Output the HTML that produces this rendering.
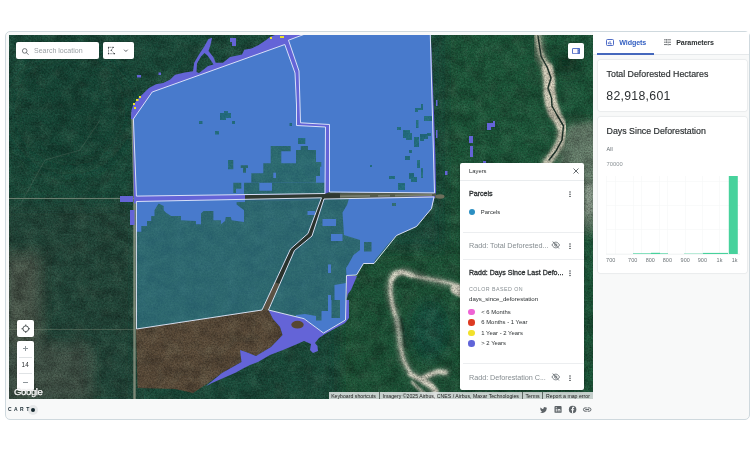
<!DOCTYPE html>
<html lang="en">
<head>
<meta charset="utf-8">
<title>Deforestation map</title>
<style>
*{box-sizing:border-box;margin:0;padding:0}
html,body{width:754px;height:450px;background:#fff;overflow:hidden}
body{position:relative;font-family:"Liberation Sans",sans-serif;color:#2c3032;-webkit-font-smoothing:antialiased}
.abs{position:absolute}
.t{position:absolute;white-space:nowrap;line-height:1}
#card{position:absolute;left:5px;top:31px;width:744.5px;height:388.6px;border:1px solid #cfd9de;border-radius:5px;background:#f8f9f9;overflow:hidden}
#mapwrap{position:absolute;left:9px;top:35px;width:584px;height:364px;overflow:hidden;background:#1f4a37}
#mapwrap svg{position:absolute;left:0;top:0}
.btn{position:absolute;background:#fff;border-radius:2px;box-shadow:0 0 2px rgba(0,0,0,.25)}
#tabs{position:absolute;left:593px;top:32px;width:155.5px;height:23px;background:#fff;border-bottom:1px solid #e6e9eb}
.wcard{position:absolute;left:598px;width:148.5px;background:#fff;border-radius:2px;box-shadow:0 0 0 .5px #e3e7e9,0 0 2px rgba(40,50,60,.10)}
#layers{position:absolute;left:460px;top:163.3px;width:123.6px;height:226.6px;background:#fff;border-radius:2px;box-shadow:0 1px 3px rgba(0,0,0,.35)}
.sep{position:absolute;left:3px;width:120.6px;height:1px;background:#eceef0}
.dot{position:absolute;width:6.6px;height:6.6px;border-radius:50%}
.kebab{position:absolute;width:2px}
.kebab i{display:block;width:1.4px;height:1.4px;border-radius:50%;background:#3a4044;margin-bottom:.85px}
.attr{position:absolute;top:392.5px;height:6.5px;color:#1a1a1a;font-size:5.2px;line-height:6.5px;white-space:nowrap;overflow:hidden;text-align:center}
</style>
</head>
<body>
<div id="root" style="position:absolute;left:0;top:0;width:754px;height:450px;will-change:transform">
<div id="card"></div>

<div id="mapwrap">
<svg id="map" width="584" height="364" viewBox="9 35 584 364">
<defs>
  <filter id="noise" x="0" y="0" width="100%" height="100%">
    <feTurbulence type="fractalNoise" baseFrequency="0.7" numOctaves="3" seed="7" result="n"/>
    <feColorMatrix type="matrix" values="0 0 0 0 0  0 0 0 0 0  0 0 0 0 0  1.6 0 0 0 -0.55"/>
  </filter>
  <filter id="noiseL" x="0" y="0" width="100%" height="100%">
    <feTurbulence type="fractalNoise" baseFrequency="0.5" numOctaves="3" seed="21" result="n"/>
    <feColorMatrix type="matrix" values="0 0 0 0 1  0 0 0 0 1  0 0 0 0 1  0 1.5 0 0 -0.6"/>
  </filter>
  <filter id="noiseBig" x="0" y="0" width="100%" height="100%">
    <feTurbulence type="fractalNoise" baseFrequency="0.07 0.09" numOctaves="4" seed="3" result="n"/>
    <feColorMatrix type="matrix" values="0 0 0 0 0  0 0 0 0 0  0 0 0 0 0  2.4 0 0 0 -0.95"/>
  </filter>
  <filter id="noiseBigL" x="0" y="0" width="100%" height="100%">
    <feTurbulence type="fractalNoise" baseFrequency="0.08 0.07" numOctaves="4" seed="11" result="n"/>
    <feColorMatrix type="matrix" values="0 0 0 0 0.75  0 0 0 0 1  0 0 0 0 0.7  0 2.4 0 0 -1.05"/>
  </filter>
  <filter id="b1"><feGaussianBlur stdDeviation="0.8"/></filter>
  <filter id="b2"><feGaussianBlur stdDeviation="2.2"/></filter>
  <filter id="b6"><feGaussianBlur stdDeviation="7"/></filter>
  <clipPath id="parcelclip">
    <path d="M133.400 119L152.200 92L284.800 44.500L295 73L296.500 105L296.500 125.500L325.500 127L325 193.500L136.400 196.100Z"/>
    <path d="M136.400 201.500L321.500 197.800L308 233.500L290.500 249L262 310L136.500 329Z"/>
    <path d="M324 199L434 197L431.500 208.500L416.500 226.500L396.500 235.500L374 263.500L363.500 263.500L356.500 275L346.500 275.500L345.500 320L323.500 333L304 318.700L268.500 310L294.500 250.500L312 236Z"/>
  </clipPath>
  <clipPath id="mapclip"><rect x="9" y="35" width="584" height="364"/></clipPath>
</defs>
<g clip-path="url(#mapclip)">
<!-- base forest -->
<rect x="9" y="35" width="584" height="364" fill="#1a4e3c"/>
<!-- tonal variation -->
<g filter="url(#b6)">
  <rect x="0" y="205" width="136" height="200" fill="#234a3a"/>
  <rect x="0" y="255" width="40" height="90" fill="#4b5a4e"/>
  <rect x="0" y="345" width="90" height="60" fill="#43554a"/>
  <ellipse cx="70" cy="110" rx="60" ry="60" fill="#174a39"/>
  <rect x="445" y="20" width="160" height="400" fill="#1f5a3b"/>
  <rect x="340" y="250" width="120" height="160" fill="#1d5639"/>
  <rect x="572" y="128" width="30" height="100" fill="#6a8371"/>
  <ellipse cx="566" cy="63" rx="12" ry="10" fill="#0b2a1f"/>
  <ellipse cx="430" cy="330" rx="20" ry="30" fill="#185240"/>
</g>
<g filter="url(#b2)"><path d="M568 127L594 122L594 222L584 222L584 166L558 166Z" fill="#6b8470" opacity=".85"/><path d="M585 185L594 183L594 212L585 214Z" fill="#9aa99a" opacity=".8"/></g>
<!-- olive pasture below the parcel overlay -->
<g clip-path="url(#parcelclip)"><g filter="url(#b2)">
  <path d="M130 196L330 195L440 195L440 240L346 280L346 325L324 337L262 315L130 333Z" fill="#30451a"/>
  <path d="M230 145L330 143L330 196L230 198Z" fill="#2d481a"/>
</g></g>
<!-- brown clearing -->
<path d="M136 329L262 310L268.500 310L273 319L280 327L282.500 335L271 347L256 356L246 352L240 350L241.500 362L222 373L206 384.500L193 393L175 389L137.500 388Z" fill="#5e4e3b"/>
<!-- river sand -->
<g fill="none" stroke-linecap="round" stroke-linejoin="round">
  <path d="M537 33L540 55L547 70L549 92L553 111L562 126.500L561 142L554.500 154.500L546 164" stroke="#8f9a84" stroke-width="11" filter="url(#b2)" opacity=".7"/>
  <g filter="url(#b1)" stroke="#ddd7c2">
    <path d="M537 34L538.500 44L541 54L545 63" stroke-width="4.500" stroke="#c3c2ac"/>
    <path d="M547.500 68L549.500 80L549.500 92" stroke-width="11"/>
    <path d="M549.500 92L551 103L554.500 113" stroke-width="12"/>
    <path d="M555 114L560 122L563 129" stroke-width="10"/>
    <path d="M563 131L560 143L554 153L547 163" stroke-width="7.500" stroke="#d3d0bb"/>
  </g>
  <path d="M538 36L541 56L547.500 68L551 78L548 88L551.500 98L552 106L557 115L563.500 126L562 140L556 151L549 160" stroke="#1d342a" stroke-width="1.500"/>
  <path d="M462 290L452 284L427 279L404 271L393 274.400L389 287L391 301.800L396.700 317L399.500 339.500L402 358.500L410 373L421 379L438 371.700L446 372M421 379L431 386L433 400" stroke="#7e8f7d" stroke-width="7.500" filter="url(#b2)" opacity=".7"/>
  <g filter="url(#b1)" stroke="#dedccb">
    <path d="M462 292L456 289" stroke-width="11"/>
    <path d="M453 284L440 281L427 278.500L413 276" stroke-width="2.700"/>
    <path d="M412 275.500L402 272L395 274L391.500 280" stroke-width="5"/>
    <path d="M391 281L390.500 292L392 303L395 315" stroke-width="3.600"/>
    <path d="M396 317L398.500 330L400.500 348" stroke-width="4" stroke="#a9b3a2"/>
    <path d="M401 318L403.500 332L405 346" stroke-width="3" stroke="#0f3328" opacity=".8"/>
    <path d="M401 349L404 361L410.500 373" stroke-width="3"/>
    <path d="M410 374L420 379.500L430 374.500L438 371.500L445.500 372.500" stroke-width="4.500"/>
    <path d="M423 381L431 385.500L436 391L434 399" stroke-width="5.500"/>
    <path d="M412 382L418 388L425 394" stroke-width="3" stroke="#c9c9b8"/>
  </g>
</g>
<!-- forest texture -->
<rect x="9" y="35" width="584" height="364" fill="#000" filter="url(#noiseBig)" opacity=".22"/>
<rect x="9" y="35" width="584" height="364" fill="#fff" filter="url(#noiseBigL)" opacity=".07"/>
<rect x="9" y="35" width="584" height="364" fill="#000" filter="url(#noise)" opacity=".38"/>
<rect x="9" y="35" width="584" height="364" fill="#fff" filter="url(#noiseL)" opacity=".09"/>
<!-- faint roads -->
<path d="M9 198.500H134" stroke="#7d8a7c" stroke-width="1" opacity=".8"/>
<path d="M9 329.500H134" stroke="#71806f" stroke-width=".8" opacity=".6"/>
<path d="M132.300 112L134.500 196L134.500 400" stroke="#8c9482" stroke-width="2.400" opacity=".85" fill="none"/>
<path d="M20 205L45 160L80 150L100 120" stroke="#5d7463" stroke-width=".7" fill="none" opacity=".5"/>
<!-- road strips between parcels -->
<path d="M245 197.800L436 195" stroke="#545b4c" stroke-width="6.500" fill="none"/>
<path d="M245 197.800L340 196.400" stroke="#2f3831" stroke-width="6.500" fill="none"/>
<ellipse cx="440" cy="196.500" rx="4.500" ry="2.200" fill="#6d6f5c"/>
<path d="M340 196.400L432 195" stroke="#8a8f7f" stroke-width="1.800" stroke-dasharray="30 8 12 5 40 10" opacity=".7"/>
<path d="M322.800 198.400L310 234.800L292.500 249.800L277 283" stroke="#2a322c" stroke-width="5.500" fill="none" stroke-linejoin="round"/>
<path d="M277 283L265.300 310" stroke="#5c5243" stroke-width="5.500" fill="none"/>
<!-- deforestation (violet) -->
<mask id="dmask" maskUnits="userSpaceOnUse" x="9" y="35" width="584" height="364">
  <rect x="9" y="35" width="584" height="364" fill="#fff"/>
  <g fill="#000">
    <!-- forest island in NW strip -->
    <path d="M196.500 72L197 63.500L201 56.500L204.500 53L207.500 55.500L211 60.500L213.500 64.500L208 66L203 70L199 73Z"/>
    <!-- forest remaining in SE of parcel 1 -->
    <path d="M244 182.700H259.300V190.700H272V182.700H324.500V194H244Z"/>
    <path d="M233.300 182.700H241.300V188.700H236V193H233.300Z"/>
    <path d="M251.300 173.300H263.300V163.300H270.700V146H290.700V151.300H281.300V163.300H296V150H300.700V146H308V150H316V162H321.300V166.700H320V176H316V182.700H251.300Z"/>
    <path d="M298 138H305.300V144H298Z M228 160H233.300V169.300H228Z M240.700 165.300H248V168H246V172.700H243V168H240.700Z"/>
    <!-- specks in parcel 1 -->
    <path d="M220 113H224V111H228V113H231V118H226V120H220Z M199 121H202.500V124H199Z M232 121H235V124H232Z M215 131H219V134.500H215Z M289.500 123H292V126H289.500Z"/>
    <!-- specks in parcel 2 -->
    <path d="M415 108H421V104H423V110H418V112H415Z M424 116H432V121H424Z M416 120H418.500V128H416Z M398 127H401V130H398Z M403 130H410V134H407V138H403Z M420 135H424V141H420Z M427 133H431V136H427Z"/>
    <path d="M404 130H409V133H412V140H406V136H404Z M414 137H419V147H414Z M420 134H428V139H420Z M397 127H400V130H397Z M409 150H412V153H409Z M405 156H410V160H405Z M417 160H420V168H417Z M421 168H423V178H421Z M409 173H414V177H417V182H411V179H409Z M389 176H395V179H389Z M398 183H405V190H398Z M370 165H372V167H370Z M392 203H396V206H392Z"/>
    <!-- parcel 4 -->
    <path d="M331.500 300H340V318H331.500Z M364 242H371.500V251.500H364Z M316 311H321.500V320.500H316Z"/>
  </g>
  <path d="M273.300 172.700H276V178H273.300Z" fill="#fff"/>
</mask>
<g fill="#6464d7" mask="url(#dmask)">
  <path d="M131 119L131.500 110L133.400 104.600L139.300 97.400L148.900 87.900L156 84.300L163.200 83.100L170.300 79.500L175.100 74.800L184.700 72.400L193 71.200L194.200 62.800L199 54.500L203.800 47.300L208.500 39L212.100 37.800L210.500 45L208.500 50.900L213.300 56.900L215.700 62.800L222.900 62.800L230 56.900L242 54.500L244.300 49.700L251.500 48.500L258.700 44.900L265.800 40.200L270.600 36.600L275 35L430.800 35L432.500 78L434 113L435.500 160L436 193.200L329 192.300L325 193.800L245 195L245 202L134 203.500L133 119Z"/>
  <path d="M230 38H236V46H232V42H230Z M137 75H141V77.500H137Z M158.500 72.500H161V75H158.500Z"/>
  <path d="M136 199L236.600 199L236.600 204.400L244 210.200L244 221.900L231.600 220.200L230.800 216.900L225.800 216.900L225 221L220.900 224.300L220.900 220.200L213.400 220.200L213.400 211L203.500 211L201 213.600L201 224.300L196 224.300L196 221L181 220.200L181 216L171.100 216L166.100 212.700L163.700 210.200L163.700 206L158.700 203.600L157 206L154.500 210.200L154.500 216L151.200 216L151.200 221L147 221L147 226L141.300 226L141.300 231.800L136 231.800Z"/>
  <path d="M130 210H134.500V225H130Z M120 196H133V202H120Z"/>
  <path d="M349 198.500L435 196L431.500 208.500L416.500 226.500L396.500 235.500L389 243L375 260L374 263.500L363.500 263.500L356.500 275L346.500 275.500L346 268L348 265L353.500 255L360 250L360 240L344 235L342.500 212.500L347 205Z"/>
  <path d="M322.500 219H336V226H322.500Z M331 234H342.500V241H331Z M307.500 211H315V215H307.500Z M328 264.500H331V273H328Z M328 295H331V310H328Z"/>
  <path d="M346.500 276L357 276L351 290L348 294L346.500 300Z"/>
  <path d="M296 315L305 314L316 316L321.500 311L328 311L328 300L334.500 300L334.500 285L346 283L345.500 320L323.500 333L304 318.700L296 317Z"/>
  <path d="M268.500 310L304 318.700L323.500 333L345.500 320L346 300L349 300L349 318L345 323L334 329L325 334L319 338L315 343L317.500 346L318 351L313 353L310 350L311 344L304 341L295 345L283 350L270 355L258 362L250 365L243 368.500L236 372.500L228 376L220 379.500L212 383L206 386L222 373L241.500 362L240 350L246 352L256 356L271 347L282.500 335L280 327L273 319Z"/>
  <!-- specks east of parcel 2 -->
  <path d="M487 123H493V121H495V127H491V130H487Z M469 136H473V143H469Z M470 146H473V157H470Z M445 171H447.500V175H445Z M483 161H486V164H483Z M436 100H437.500V106H436Z M436 130H437.500V138H436Z"/>
</g>
<ellipse cx="297.500" cy="324.700" rx="6.200" ry="3.900" fill="#574733"/>
<!-- yellow specks -->
<path d="M133 103H135V105H133Z M136 99H138.500V101H136Z M139 96H141V98H139Z M134 107H136V109H134Z M280 36H284V38H280Z M270 37H272V39H270Z" fill="#e8e12a"/>
<!-- parcels -->
<g fill="rgba(43,143,194,0.5)" stroke="#e3e9fb" stroke-width="1" stroke-opacity=".92" stroke-linejoin="round">
  <path d="M133.400 119L152.200 92L284.800 44.500L295 73L296.500 105L296.500 125.500L325.500 127L325 193.500L136.400 196.100Z"/>
  <path d="M288.500 40.200L303 34.800L315 30L430.200 30L430.300 35L434.500 192.900L329.500 192L329.500 124.500L300.500 122.800L300 105L299 71Z"/>
  <path d="M136.400 201.500L321.500 197.800L308 233.500L290.500 249L262 310L136.500 329Z"/>
  <path d="M324 199L434 197L431.500 208.500L416.500 226.500L396.500 235.500L374 263.500L363.500 263.500L356.500 275L346.500 275.500L345.500 320L323.500 333L304 318.700L268.500 310L294.500 250.500L312 236Z"/>
</g>

</g>

</svg>
</div>

<!-- map controls -->
<div class="btn" style="left:16.3px;top:42.3px;width:82.7px;height:16.5px"></div>
<svg class="abs" style="left:20.5px;top:46.5px" width="9" height="9" viewBox="0 0 9 9"><circle cx="3.7" cy="3.9" r="2.3" fill="none" stroke="#565c60" stroke-width="0.8"/><path d="M5.4 5.6L7.3 7.5" stroke="#565c60" stroke-width="0.8" stroke-linecap="round"/></svg>
<div class="t" style="left:34px;top:46.9px;font-size:7.05px;color:#9aa1a5">Search location</div>
<div class="btn" style="left:103px;top:42.3px;width:31.2px;height:16.5px"></div>
<svg class="abs" style="left:107px;top:46px" width="24" height="10" viewBox="0 0 24 10"><path d="M1.5 1.3H6.3L4.2 4.3L7.5 7.7H1.5Z" fill="none" stroke="#44494d" stroke-width="0.7" stroke-dasharray="1.1 0.6"/><g fill="#33383b"><circle cx="1.5" cy="1.3" r="0.6"/><circle cx="6.3" cy="1.3" r="0.6"/><circle cx="4.2" cy="4.3" r="0.6"/><circle cx="7.5" cy="7.7" r="0.6"/><circle cx="1.5" cy="7.7" r="0.6"/></g><path d="M17.1 3.7L18.9 5.5L20.7 3.700" fill="none" stroke="#4c5155" stroke-width="0.9"/></svg>
<div class="btn" style="left:568px;top:43px;width:16.2px;height:16.2px"></div>
<svg class="abs" style="left:572px;top:48px" width="8.2" height="6.2" viewBox="0 0 8.2 6.2"><rect x="0.45" y="0.45" width="7.3" height="5.3" rx="0.6" fill="#fdf7fa" stroke="#3c5cc0" stroke-width="0.9"/><rect x="5.6" y="0.5" width="2.1" height="5.2" fill="#3c5cc0"/><rect x="6.3" y="1.5" width="0.7" height="0.7" fill="#fff"/><rect x="6.3" y="3.6" width="0.7" height="0.7" fill="#fff"/></svg>

<div class="btn" style="left:17px;top:319.5px;width:16.5px;height:17px"></div>
<svg class="abs" style="left:20.5px;top:323.5px" width="9.5" height="9.5" viewBox="0 0 10 10"><circle cx="5" cy="5" r="3" fill="none" stroke="#3a3f42" stroke-width="0.9"/><path d="M5 0.5V2.2M5 7.8V9.5M0.5 5H2.2M7.8 5H9.5" stroke="#3a3f42" stroke-width="0.9"/></svg>
<div class="btn" style="left:17px;top:340.5px;width:16.5px;height:50px"></div>
<div class="abs" style="left:19px;top:356.8px;width:12.5px;height:1px;background:#e0e3e5"></div>
<div class="abs" style="left:19px;top:373px;width:12.5px;height:1px;background:#e0e3e5"></div>
<div class="abs" style="left:22.5px;top:348.2px;width:5.6px;height:0.9px;background:#8d9599"></div>
<div class="abs" style="left:24.85px;top:345.8px;width:0.9px;height:5.6px;background:#8d9599"></div>
<div class="abs" style="left:22.5px;top:381.6px;width:5.6px;height:0.9px;background:#8d9599"></div>
<div class="t" style="left:21.6px;top:362px;font-size:6.4px;color:#2c3032">14</div>
<div class="t" id="google" style="left:14px;top:386.6px;font-size:9.6px;color:#fff;letter-spacing:-.4px;-webkit-text-stroke:.25px #fff;text-shadow:0 0 1.5px rgba(0,0,0,.55)">Google</div>

<!-- attribution -->
<div class="abs" style="left:329px;top:392.4px;width:264px;height:6.6px;background:rgba(226,229,229,.86)"></div>
<div class="abs" style="left:378.8px;top:392.4px;width:.8px;height:6.6px;background:rgba(40,50,45,.65)"></div>
<div class="abs" style="left:521.9px;top:392.4px;width:.8px;height:6.6px;background:rgba(40,50,45,.65)"></div>
<div class="abs" style="left:542.3px;top:392.4px;width:.8px;height:6.6px;background:rgba(40,50,45,.65)"></div>
<div class="attr" style="left:329.5px;width:48px">Keyboard shortcuts</div>
<div class="attr" style="left:380.5px;width:140.5px">Imagery ©2025 Airbus, CNES / Airbus, Maxar Technologies</div>
<div class="attr" style="left:523.5px;width:18px">Terms</div>
<div class="attr" style="left:544px;width:48px">Report a map error</div>

<!-- layers panel -->
<div id="layers">
  <div class="t" style="left:9px;top:5.8px;font-size:5.85px;color:#2c3032">Layers</div>
  <svg class="abs" style="left:113.4px;top:5.2px" width="6" height="6" viewBox="0 0 6 6"><path d="M0.5 0.5L5.5 5.5M5.5 0.5L0.5 5.5" stroke="#4d5357" stroke-width="0.85"/></svg>
  <div class="sep" style="top:16.3px;left:0;width:123.6px;background:#e9ecee"></div>
  <div class="t" style="left:9px;top:27.9px;font-size:7.1px;color:#2c3032;-webkit-text-stroke:.3px #2c3032">Parcels</div>
  <svg class="abs" style="left:108.9px;top:27.6px" width="2" height="6.400" viewBox="0 0 2 6.400"><circle cx="1" cy="0.900" r="0.750" fill="#3a4044"/><circle cx="1" cy="3.200" r="0.750" fill="#3a4044"/><circle cx="1" cy="5.500" r="0.750" fill="#3a4044"/></svg>
  <div class="dot" style="left:8.4px;top:45.5px;background:#2b8fc2;width:6.3px;height:6.3px;margin:.25px"></div>
  <div class="t" style="left:20.8px;top:47px;font-size:5.85px;color:#2c3032">Parcels</div>
  <div class="sep" style="top:68.5px"></div>
  <div class="t" style="left:9px;top:79.1px;font-size:7.25px;color:#868d91;letter-spacing:-.02px">Radd: Total Deforested...</div>
  <svg class="abs eye" style="left:91px;top:78.0px" width="9.5" height="8" viewBox="0 0 10 9"><path d="M0.7 4.5C2 2.2 3.5 1.3 5 1.3S8 2.2 9.3 4.5C8 6.8 6.5 7.7 5 7.7S2 6.8 0.7 4.5Z" fill="none" stroke="#5d656a" stroke-width="0.9"/><circle cx="5" cy="4.5" r="1.3" fill="none" stroke="#5d656a" stroke-width="0.9"/><path d="M1.6 0.6L8.6 8.4" stroke="#5d656a" stroke-width="0.9"/></svg>
  <svg class="abs" style="left:108.9px;top:79.6px" width="2" height="6.400" viewBox="0 0 2 6.400"><circle cx="1" cy="0.900" r="0.750" fill="#3a4044"/><circle cx="1" cy="3.200" r="0.750" fill="#3a4044"/><circle cx="1" cy="5.500" r="0.750" fill="#3a4044"/></svg>
  <div class="sep" style="top:96px"></div>
  <div class="t" style="left:9px;top:105.9px;font-size:7.05px;color:#2c3032;-webkit-text-stroke:.3px #2c3032">Radd: Days Since Last Defo...</div>
  <svg class="abs" style="left:108.9px;top:107.1px" width="2" height="6.400" viewBox="0 0 2 6.400"><circle cx="1" cy="0.900" r="0.750" fill="#3a4044"/><circle cx="1" cy="3.200" r="0.750" fill="#3a4044"/><circle cx="1" cy="5.500" r="0.750" fill="#3a4044"/></svg>
  <div class="t" style="left:9px;top:124px;font-size:5.3px;color:#868d91;letter-spacing:.45px">COLOR BASED ON</div>
  <div class="t" style="left:9px;top:132.5px;font-size:6.1px;color:#2c3032">days_since_deforestation</div>
  <div class="dot" style="left:8.4px;top:145.4px;background:#ee63d4"></div>
  <div class="t" style="left:21.3px;top:146.6px;font-size:5.9px">&lt; 6 Months</div>
  <div class="dot" style="left:8.4px;top:155.7px;background:#dd3a22"></div>
  <div class="t" style="left:21.3px;top:157.2px;font-size:5.9px">6 Months - 1 Year</div>
  <div class="dot" style="left:8.4px;top:166.5px;background:#f2e12b"></div>
  <div class="t" style="left:21.3px;top:168.2px;font-size:5.9px">1 Year - 2 Years</div>
  <div class="dot" style="left:8.4px;top:176.7px;background:#6064d8"></div>
  <div class="t" style="left:21.3px;top:177.9px;font-size:5.9px">&gt; 2 Years</div>
  <div class="sep" style="top:199.5px"></div>
  <div class="t" style="left:9px;top:210.9px;font-size:7.25px;color:#868d91;letter-spacing:-.04px">Radd: Deforestation C...</div>
  <svg class="abs eye" style="left:91px;top:209.7px" width="9.5" height="8" viewBox="0 0 10 9"><path d="M0.7 4.5C2 2.2 3.5 1.3 5 1.3S8 2.2 9.3 4.5C8 6.8 6.5 7.7 5 7.7S2 6.8 0.7 4.5Z" fill="none" stroke="#5d656a" stroke-width="0.9"/><circle cx="5" cy="4.5" r="1.3" fill="none" stroke="#5d656a" stroke-width="0.9"/><path d="M1.6 0.6L8.6 8.4" stroke="#5d656a" stroke-width="0.9"/></svg>
  <svg class="abs" style="left:108.9px;top:211.3px" width="2" height="6.400" viewBox="0 0 2 6.400"><circle cx="1" cy="0.900" r="0.750" fill="#3a4044"/><circle cx="1" cy="3.200" r="0.750" fill="#3a4044"/><circle cx="1" cy="5.500" r="0.750" fill="#3a4044"/></svg>
</div>

<!-- footer -->
<div class="abs" style="left:28.2px;top:404.6px;width:10.2px;height:10.2px;border-radius:50%;background:#e6e8e9"></div>
<div class="t" style="left:8px;top:407.3px;font-size:5px;font-weight:bold;letter-spacing:2.45px;color:#16272e">CART</div>
<div class="abs" style="left:31.3px;top:407.7px;width:4px;height:4px;border-radius:50%;background:#16272e"></div>
<svg class="abs" style="left:539px;top:405px" width="54" height="9" viewBox="0 0 54 9">
  <path d="M8.200 1.900c-.3.150-.6.250-1 .3.350-.2.600-.550.750-.950-.350.200-.700.350-1.100.400A1.700 1.700 0 0 0 3.900 3.200C2.500 3.150 1.300 2.450.450 1.400c-.450.800-.200 1.800.550 2.300-.300 0-.550-.100-.800-.200 0 .850.600 1.550 1.400 1.700-.250.050-.500.100-.800.050.250.700.900 1.200 1.650 1.200C1.800 7 .900 7.300 0 7.200c.800.500 1.700.800 2.700.800 3.250 0 5.050-2.700 5.050-5.050v-.250c.350-.250.650-.550.450-.800z" fill="#5d6367" transform="translate(1.100,1.200) scale(0.840)"/>
  <rect x="15.500" y="1" width="7.100" height="6.800" rx="0.900" fill="#5d6367"/><rect x="16.800" y="3.900" width="0.900" height="2.700" fill="#f8f9f9"/><rect x="16.700" y="2.300" width="1.100" height="0.900" fill="#f8f9f9"/><path d="M18.700 6.600V3.900h.900v.4c.600-.700 1.800-.500 1.800.600v1.700h-.900V5.100c0-.600-.900-.600-.900 0v1.500z" fill="#f8f9f9"/>
  <circle cx="33.600" cy="4.500" r="3.750" fill="#5d6367"/><path d="M34.100 8.300V5.300h.900l.200-1.100h-1.100v-.700c0-.400.200-.600.600-.600h.500V1.900c-.900-.2-2.200-.1-2.200 1.400v.900h-.900v1.100h.900v3z" fill="#f8f9f9"/>
  <path d="M47.400 2.900h-1.300a1.650 1.650 0 0 0 0 3.300h1.300M49 2.900h1.300a1.650 1.650 0 0 1 0 3.300H49M46.700 4.550h3" fill="none" stroke="#5d6367" stroke-width="1" stroke-linecap="round"/>
</svg>

<!-- right panel -->
<div id="tabs"></div>
<div class="abs" style="left:597px;top:53.4px;width:57px;height:1.5px;background:#4568bd"></div>
<svg class="abs" style="left:606.3px;top:38.9px" width="8" height="7" viewBox="0 0 8 7"><rect x="0.5" y="0.5" width="7" height="6" rx="0.9" fill="none" stroke="#3c5cc0" stroke-width="0.9"/><path d="M2.4 3.3V5.1M4 2.1V5.1M3.8 4.8H5.8" stroke="#3c5cc0" stroke-width="0.85" fill="none"/></svg>
<div class="t" style="left:619.3px;top:39.600px;font-size:7.100px;font-weight:bold;color:#3460c2;letter-spacing:-.1px">Widgets</div>
<svg class="abs" style="left:664px;top:39.200px" width="7" height="6.400" viewBox="0 0 7 6.400"><path d="M0 .8H1.800M3.400 .8H7M2.600 0V1.700M0 3.200H1.800M3.400 3.200H7M2.600 2.300V4.100M0 5.600H3.400M5 5.600H7M4.200 4.700V6.400" stroke="#3f4549" stroke-width="0.750" fill="none"/></svg>
<div class="t" style="left:676.2px;top:39.600px;font-size:7.100px;font-weight:bold;color:#2c3032;letter-spacing:-.1px">Parameters</div>

<div class="wcard" style="top:59.700px;height:51.600px"></div>
<div class="t" style="left:606.600px;top:69.600px;font-size:8.800px;color:#2c3032;-webkit-text-stroke:.18px #2c3032">Total Deforested Hectares</div>
<div class="t" style="left:606.300px;top:90.300px;font-size:12.300px;color:#2c3032;letter-spacing:.28px">82,918,601</div>

<div class="wcard" style="top:116.600px;height:156.200px"></div>
<div class="t" style="left:606.600px;top:127px;font-size:8.800px;color:#2c3032;-webkit-text-stroke:.18px #2c3032">Days Since Deforestation</div>
<div class="t" style="left:606.600px;top:147.400px;font-size:5.400px;color:#5d656a">All</div>
<div class="t" style="left:606.600px;top:162.200px;font-size:5.800px;color:#8a9195">70000</div>
<svg class="abs" style="left:598px;top:170px" width="148" height="100" viewBox="598 170 148 100">
  <g stroke="#f5f6f7" stroke-width="0.600">
    <path d="M606 181.500H740M606 205.500H740M606 229.500H740"/>
    <path d="M606.500 176V254M615.500 176V254M633.500 176V254M641.500 176V254M659.500 176V254M667.500 176V254M685.500 176V254M702.500 176V254M719.500 176V254"/>
  </g>
  <path d="M606 254.200H740" stroke="#e6e9eb" stroke-width="0.600"/>
  <rect x="728.800" y="176" width="9" height="78" fill="#47d29c"/>
  <rect x="633" y="253.200" width="35" height="0.800" fill="#47d29c" opacity=".8"/>
  <rect x="651" y="252.800" width="9" height="1.200" fill="#47d29c"/>
  <rect x="684" y="253.400" width="19" height="0.600" fill="#47d29c" opacity=".6"/>
  <rect x="703" y="252.900" width="25" height="1.100" fill="#47d29c"/>
  <g font-family="Liberation Sans, sans-serif" font-size="5.500" fill="#6d7478" text-anchor="middle">
    <text x="610.700" y="261.800">700</text><text x="632.700" y="261.800">700</text><text x="650.300" y="261.800">800</text><text x="667.400" y="261.800">800</text>
    <text x="685.200" y="261.800">900</text><text x="702.400" y="261.800">900</text><text x="719.500" y="261.800">1k</text><text x="734.600" y="261.800">1k</text>
  </g>
</svg>
</div>
</body>
</html>
